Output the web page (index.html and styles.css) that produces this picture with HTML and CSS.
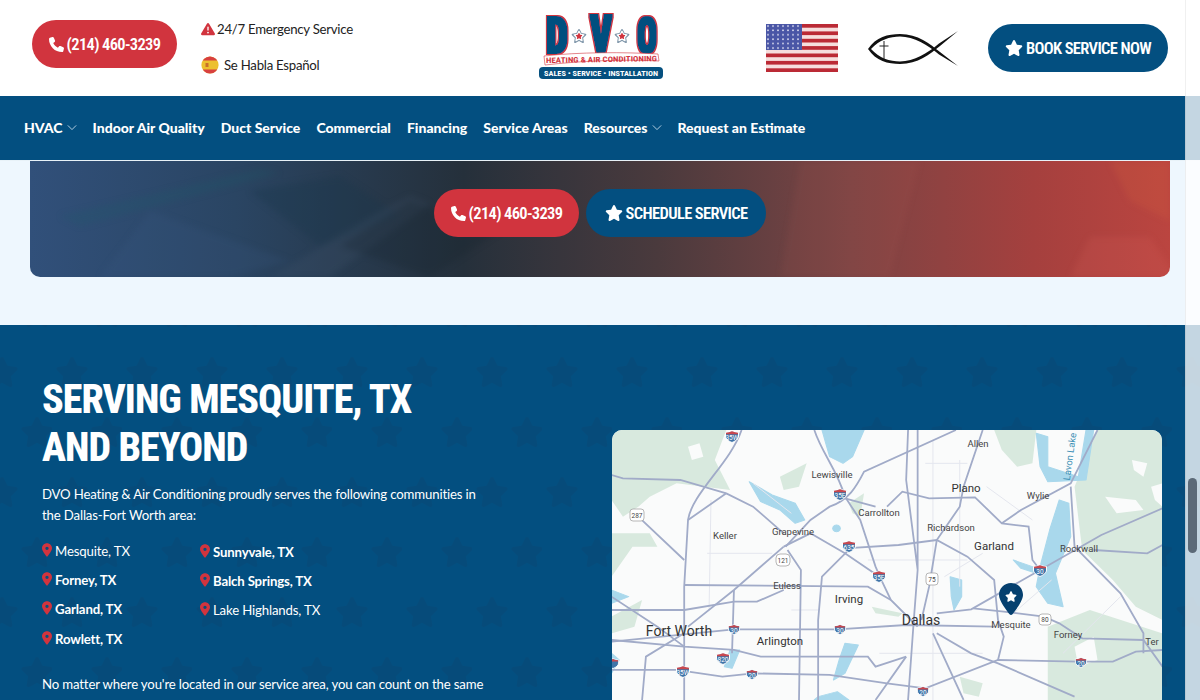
FILE: index.html
```html
<!DOCTYPE html>
<html lang="en">
<head>
    <meta charset="UTF-8">
    <meta name="viewport" content="width=device-width, initial-scale=1.0">
    <title>Serving Mesquite, TX | DVO Heating &amp; Air Conditioning</title>
    <link rel="stylesheet" href="styles.css">
</head>
<body>
    <svg class="icon-defs" aria-hidden="true">
        <symbol id="i-phone" viewBox="0 0 512 512"><path d="M164.9 24.6c-7.7-18.6-28-28.5-47.4-23.2l-88 24C12.1 30.2 0 46 0 64C0 311.4 200.6 512 448 512c18 0 33.8-12.1 38.6-29.5l24-88c5.3-19.4-4.6-39.7-23.2-47.4l-96-40c-16.3-6.8-35.2-2.1-46.3 11.6L304.7 368C234.3 334.7 177.3 277.7 144 207.3L193.3 167c13.7-11.2 18.4-30 11.6-46.3l-40-96z"/></symbol>
        <symbol id="i-star" viewBox="0 0 576 512"><path d="M316.9 18C311.6 7 300.4 0 288.1 0s-23.4 7-28.8 18L195 150.3 51.4 171.5c-12 1.8-22 10.2-25.7 21.7s-.7 24.2 7.9 32.7L137.8 329 113.2 474.7c-2 12 3 24.2 12.9 31.3s23 8 33.8 2.3l128.3-68.5 128.3 68.5c10.8 5.7 23.9 4.9 33.8-2.3s14.9-19.3 12.9-31.3L438.5 329 542.7 225.9c8.6-8.5 11.7-21.2 7.9-32.7s-13.7-19.9-25.7-21.7L381.2 150.3 316.9 18z"/></symbol>
        <symbol id="i-pin" viewBox="0 0 384 512"><path d="M215.7 499.2C267 435 384 279.4 384 192C384 86 298 0 192 0S0 86 0 192c0 87.4 117 243 168.3 307.2c12.3 15.3 35.1 15.3 47.4 0zM192 128a64 64 0 1 1 0 128 64 64 0 1 1 0-128z"/></symbol>
        <symbol id="i-pin-solid" viewBox="0 0 384 512"><path d="M215.7 499.2C267 435 384 279.4 384 192C384 86 298 0 192 0S0 86 0 192c0 87.4 117 243 168.3 307.2c12.3 15.3 35.1 15.3 47.400 0z"/></symbol>
        <symbol id="i-warn" viewBox="0 0 512 512"><path d="M256 32c14.2 0 27.3 7.5 34.5 19.8l216 368c7.3 12.4 7.3 27.7 .2 40.1S486.3 480 472 480H40c-14.3 0-27.6-7.7-34.7-20.1s-7-27.8 .2-40.1l216-368C228.7 39.5 241.8 32 256 32zm0 128c-13.3 0-24 10.7-24 24V296c0 13.3 10.7 24 24 24s24-10.7 24-24V184c0-13.3-10.7-24-24-24zm32 224a32 32 0 1 0 -64 0 32 32 0 1 0 64 0z"/></symbol>
        <symbol id="i-chevron" viewBox="0 0 12 8"><path d="M1 1.500l5 5 5-5" fill="none" stroke="currentColor" stroke-width="1"/></symbol>
        <symbol id="i-shield" viewBox="0 0 14 14" overflow="visible"><path d="M.5 3.500C3 3.500 5 3 7 2c2 1 4 1.500 6.500 1.500V7c0 3-3 5-6.500 6.500C3.500 12 .5 10 .5 7z" fill="#3f74a8" stroke="#fff"/><path d="M1 3.700C3 3.700 5 3.200 7 2.300c2 .9 4 1.400 6 1.400v1.500H1z" fill="#c9474e"/></symbol>
    </svg>

    <header class="top-bar">
        <div class="top-left">
            <a class="btn btn-red" href="#"><svg class="btn-icon phone"><use href="#i-phone"/></svg>(214) 460-3239</a>
            <div class="top-info">
                <p class="info-row"><svg class="warn-icon"><use href="#i-warn"/></svg>24/7 Emergency Service</p>
                <p class="info-row">
                    <svg class="spain-flag" viewBox="0 0 18 18">
                        <defs><clipPath id="spain-clip"><circle cx="9" cy="9" r="8.600"/></clipPath></defs>
                        <g clip-path="url(#spain-clip)">
                            <rect width="18" height="18" fill="#ecc02f"/>
                            <rect width="18" height="4.500" fill="#d8403f"/>
                            <rect y="13.500" width="18" height="4.500" fill="#d8403f"/>
                            <rect x="4.500" y="7" width="3" height="4" fill="#c9702a"/>
                        </g>
                    </svg>
                    <span>Se Habla Español</span>
                </p>
            </div>
        </div>

        <svg class="logo" viewBox="0 0 132 96" role="img" aria-label="DVO Heating and Air Conditioning">
            <defs>
                <filter id="logo-outline" x="-20%" y="-20%" width="140%" height="140%">
                    <feMorphology in="SourceAlpha" operator="dilate" radius="1.700" result="fat"/>
                    <feFlood flood-color="#d1343e"/>
                    <feComposite in2="fat" operator="in" result="red"/>
                    <feMorphology in="SourceGraphic" operator="dilate" radius=".8" result="blue"/>
                    <feMerge><feMergeNode in="red"/><feMergeNode in="blue"/></feMerge>
                </filter>
            </defs>
            <g filter="url(#logo-outline)">
                <text class="logo-letter" x="7" y="53" textLength="22" lengthAdjust="spacingAndGlyphs">D</text>
                <text class="logo-letter tall" x="51" y="53" textLength="22" lengthAdjust="spacingAndGlyphs">V</text>
                <text class="logo-letter" x="98" y="53" textLength="20" lengthAdjust="spacingAndGlyphs">O</text>
            </g>
            <use class="logo-star-back" href="#i-star" x="32" y="28" width="16" height="16"/>
            <use class="logo-star-mid" href="#i-star" x="34" y="30" width="12" height="12"/>
            <use class="logo-star-dot" href="#i-star" x="36.500" y="32.500" width="7" height="7"/>
            <use class="logo-star-back" href="#i-star" x="75" y="28" width="16" height="16"/>
            <use class="logo-star-mid" href="#i-star" x="77" y="30" width="12" height="12"/>
            <use class="logo-star-dot" href="#i-star" x="79.500" y="32.500" width="7" height="7"/>
            <path class="logo-strip" d="M5 56C40 52 85 52 119 54l1 7C85 59 40 61 6 65z"/>
            <text class="logo-sub" x="7" y="63" textLength="111" lengthAdjust="spacingAndGlyphs" transform="rotate(-1 7 63)">HEATING &amp; AIR CONDITIONING</text>
            <rect class="logo-pill" x="0" y="67" width="124" height="12" rx="4"/>
            <text class="logo-tag" x="62" y="76" text-anchor="middle" textLength="114" lengthAdjust="spacingAndGlyphs">SALES • SERVICE • INSTALLATION</text>
        </svg>

        <div class="top-right">
            <svg class="us-flag" viewBox="0 0 72 48">
                <defs><pattern id="flag-stars" width="5" height="4.400" patternUnits="userSpaceOnUse"><circle cx="2" cy="2" r=".9" fill="#e8e8f4"/></pattern></defs>
                <rect width="72" height="48" fill="#f6dedd"/>
                <g fill="#bb2a35">
                    <rect y="0" width="72" height="3.700"/><rect y="7.400" width="72" height="3.700"/><rect y="14.800" width="72" height="3.700"/>
                    <rect y="22.100" width="72" height="3.700"/><rect y="29.500" width="72" height="3.700"/><rect y="36.900" width="72" height="3.700"/>
                    <rect y="44.300" width="72" height="3.700"/>
                </g>
                <rect width="36" height="26" fill="#4a56a6"/>
                <rect width="36" height="26" fill="url(#flag-stars)"/>
            </svg>
            <svg class="fish" viewBox="0 0 90 40">
                <path d="M0 21C8 9 20 6 32 6C50 6 62 16 72 24L90 38 71 26.500C60 17 46 8.500 32 8.500C22 8.500 11 12 3 21C11 30 22 33.500 32 33.500C46 33.500 60 25 71 15.500L90 3 72 18C62 26 50 36 32 36C20 36 8 33 0 21z"/>
                <path class="fish-cross" d="M16 13v18M11.500 18h9"/>
            </svg>
            <a class="btn btn-blue" href="#"><svg class="btn-icon star"><use href="#i-star"/></svg>BOOK SERVICE NOW</a>
        </div>
    </header>

    <nav class="main-nav">
        <a href="#">HVAC<svg class="chevron"><use href="#i-chevron"/></svg></a>
        <a href="#">Indoor Air Quality</a>
        <a href="#">Duct Service</a>
        <a href="#">Commercial</a>
        <a href="#">Financing</a>
        <a href="#">Service Areas</a>
        <a href="#">Resources<svg class="chevron"><use href="#i-chevron"/></svg></a>
        <a href="#">Request an Estimate</a>
    </nav>

    <section class="cta-wrap">
        <div class="cta-banner">
            <svg class="cta-texture" viewBox="0 0 1140 116" preserveAspectRatio="none" aria-hidden="true">
                <path d="M30 55L230 8 250 12 50 65z" fill="#1d5a6a" opacity=".22"/>
                <path d="M120 50L260 100 200 116H70z" fill="#3d5d88" opacity=".16"/>
                <path d="M220 30l90-15 60 40-80 30z" fill="#16344a" opacity=".3"/>
                <path d="M240 116L350 50l30-15 20 8-100 73z" fill="#45566e" opacity=".22"/>
                <path d="M310 85L380 40 470 70 400 116z" fill="#141f28" opacity=".22"/>
                <path d="M770 0h120l-30 116H750z" fill="#c9605a" opacity=".08"/>
                <path d="M1040 116l20-40h60l20 30v10z" fill="#e06a66" opacity=".14"/>
                <path d="M1080 0h60v60l-40-20z" fill="#d9653c" opacity=".2"/>
            </svg>
            <div class="cta-buttons">
                <a class="btn btn-red" href="#"><svg class="btn-icon phone"><use href="#i-phone"/></svg>(214) 460-3239</a>
                <a class="btn btn-blue" href="#"><svg class="btn-icon star"><use href="#i-star"/></svg>SCHEDULE SERVICE</a>
            </div>
        </div>
    </section>

    <section class="areas">
        <svg class="areas-stars" aria-hidden="true">
            <defs>
                <pattern id="star-bg" width="70" height="120" patternUnits="userSpaceOnUse" patternTransform="translate(-18 27)">
                    <use href="#i-star" x="3" y="4" width="34" height="32" fill="#0c4570"/>
                    <use href="#i-star" x="38" y="64" width="34" height="32" fill="#0c4570"/>
                </pattern>
            </defs>
            <rect width="100%" height="100%" fill="url(#star-bg)" opacity=".38"/>
        </svg>

        <div class="areas-text">
            <h2>SERVING MESQUITE, TX<br>AND BEYOND</h2>
            <p>DVO Heating &amp; Air Conditioning proudly serves the following communities in the Dallas-Fort Worth area:</p>
            <div class="city-lists">
                <ul class="city-list">
                    <li><svg class="pin"><use href="#i-pin"/></svg>Mesquite, TX</li>
                    <li><svg class="pin"><use href="#i-pin"/></svg><strong>Forney, TX</strong></li>
                    <li><svg class="pin"><use href="#i-pin"/></svg><strong>Garland, TX</strong></li>
                    <li><svg class="pin"><use href="#i-pin"/></svg><strong>Rowlett, TX</strong></li>
                </ul>
                <ul class="city-list second">
                    <li><svg class="pin"><use href="#i-pin"/></svg><strong>Sunnyvale, TX</strong></li>
                    <li><svg class="pin"><use href="#i-pin"/></svg><strong>Balch Springs, TX</strong></li>
                    <li><svg class="pin"><use href="#i-pin"/></svg>Lake Highlands, TX</li>
                </ul>
            </div>
            <p>No matter where you're located in our service area, you can count on the same high level of quality and reliable service that has made us a trusted name.</p>
        </div>

        <div class="map-card">
            <svg class="map" viewBox="0 0 550 270" aria-label="Map of the Dallas-Fort Worth area">
                <rect width="550" height="270" fill="#fafbfb"/>
                <g transform="translate(-12 -10) scale(.3827 .3333)">
                    <g class="map-green">
                        <path d="M30 30H330L300 120 340 210 200 190 130 230 100 260 60 290 30 240z"/>
                        <path d="M1300 30H1470V600L1400 560 1340 480 1260 390 1240 200z"/>
                        <path d="M1170 620L1280 570 1470 640V840H1170z"/>
                        <path d="M30 340H130L150 380H85L30 470z"/>
                        <path d="M1030 30H1140L1130 130 1090 140 1050 90z"/>
                        <path d="M710 560L790 580 780 590 720 580z"/>
                        <path d="M650 250L690 220 680 290 660 280z"/>
                        <path d="M30 590L110 540 90 620 30 640z"/>
                        <path d="M940 770L1000 790 990 830 950 820z"/>
                        <path d="M470 170L540 130 520 200 480 210z"/>
                    </g>
                    <g class="map-white">
                        <path d="M1390 120L1430 130 1420 170 1395 150z"/>
                        <path d="M1320 230L1400 240 1420 270 1350 280z"/>
                        <path d="M1440 200L1470 190V260L1450 240z"/>
                        <path d="M230 80L260 70 270 110 240 120z"/>
                        <path d="M1240 680L1290 650 1300 720 1250 740z"/>
                    </g>
                    <g class="map-water">
                        <path d="M580 30H690L660 110 635 130 600 110 590 70z"/>
                        <path d="M390 185L450 225 510 250 535 300 510 310 470 270 420 245z"/>
                        <path d="M1140 40L1170 50 1170 140 1250 170 1270 30H1290L1270 180 1170 185 1150 140z"/>
                        <path d="M1200 240L1225 250 1230 350 1190 460 1210 560 1170 550 1140 500 1150 440 1175 330z"/>
                        <path d="M1080 420L1130 440 1140 460 1100 445z"/>
                        <path d="M915 470L945 480 945 530 925 570 918 530z"/>
                        <path d="M640 670L675 675 640 760 610 780 625 720z"/>
                        <path d="M340 690L365 690 345 745 325 740z"/>
                        <path d="M30 700L50 720 30 760z"/>
                        <path d="M30 510L75 530 30 550z"/>
                        <path d="M570 830L620 815 650 840H560z"/>
                        <path d="M618 335a10 10 0 1 1 .1 0z"/>
                    </g>
                    <g class="roads-minor">
                        <path d="M870 60V840M940 120V500M700 420H960M850 130H960M730 700H1000M280 400H450M500 570H570"/>
                        <path d="M290 240L285 570M400 190L500 280M1010 200L1130 300M1080 580L1180 480"/>
                        <path d="M1210 700L1360 530M900 470L1000 400"/>
                    </g>
                    <g class="roads">
                        <path d="M370 30C340 130 240 220 230 300L220 500V840"/>
                        <path d="M930 30L690 155C670 200 650 240 600 260L550 300 485 380"/>
                        <path d="M560 30C580 100 620 150 640 230L680 300 720 440 735 480 760 540 830 620"/>
                        <path d="M830 30V450L820 600 805 840M805 30L800 180 830 450"/>
                        <path d="M640 235L720 260M750 260L790 215 860 235 980 232 1050 310 1120 320 1130 420 1150 450"/>
                        <path d="M480 380L550 340 640 400 730 470M640 385L780 375 880 360 960 410 1030 480 1040 600 1055 650 1040 720"/>
                        <path d="M30 665L350 628H620L800 615 1030 620"/>
                        <path d="M220 495L700 500 760 540"/>
                        <path d="M30 570H220L350 545H410L480 510"/>
                        <path d="M880 580L970 568 1150 450 1310 345 1470 265"/>
                        <path d="M30 750H200L320 770 400 760 600 765 750 790 850 805 1040 720 1250 725H1340L1400 695 1470 690"/>
                        <path d="M975 565L1055 575 1160 590 1200 610 1260 655 1420 660 1470 740"/>
                        <path d="M1230 200L1240 380 1360 520 1420 640V700"/>
                        <path d="M1050 310L1100 270 1230 190 1300 30"/>
                        <path d="M1290 390L1430 400 1470 375"/>
                        <path d="M1000 30L950 200 940 260 880 360 860 500 840 600"/>
                        <path d="M30 165L60 175 210 180 330 220 400 260 480 340"/>
                        <path d="M330 220L230 300M100 290L220 420"/>
                        <path d="M880 640L970 700 1040 730 1240 830"/>
                        <path d="M350 510L345 700M570 840V600L580 470 650 390M520 840L525 450 490 390"/>
                        <path d="M30 660L220 680 350 690 420 710H700L720 740 800 710"/>
                        <path d="M30 530L150 620 220 680M230 620L350 510 480 380M110 840L120 710 220 640"/>
                        <path d="M800 710L720 840M870 640L950 840"/>
                    </g>
                </g>
                <g class="shields">
                    <g transform="translate(120 6)"><use href="#i-shield" x="-7" y="-7" width="14" height="14"/><text y="4">35W</text></g>
                    <g transform="translate(228 64)"><use href="#i-shield" x="-7" y="-7" width="14" height="14"/><text y="4">35E</text></g>
                    <g transform="translate(237 116)"><use href="#i-shield" x="-7" y="-7" width="14" height="14"/><text y="4">635</text></g>
                    <g transform="translate(267 146)"><use href="#i-shield" x="-7" y="-7" width="14" height="14"/><text y="4">35E</text></g>
                    <g transform="translate(428 140)"><use href="#i-shield" x="-7" y="-7" width="14" height="14"/><text y="4">30</text></g>
                    <g transform="translate(122 199)"><use href="#i-shield" x="-6" y="-6" width="12" height="12"/><text y="4">30</text></g>
                    <g transform="translate(228 199)"><use href="#i-shield" x="-6" y="-6" width="12" height="12"/><text y="4">30</text></g>
                    <g transform="translate(111 228)"><use href="#i-shield" x="-7" y="-7" width="14" height="14"/><text y="4">820</text></g>
                    <g transform="translate(71 241)"><use href="#i-shield" x="-7" y="-7" width="14" height="14"/><text y="4">35W</text></g>
                    <g transform="translate(140 244)"><use href="#i-shield" x="-6" y="-6" width="12" height="12"/><text y="4">20</text></g>
                    <g transform="translate(311 261)"><use href="#i-shield" x="-6" y="-6" width="12" height="12"/><text y="4">20</text></g>
                    <g transform="translate(469 232)"><use href="#i-shield" x="-6" y="-6" width="12" height="12"/><text y="4">20</text></g>
                    <g transform="translate(1 233)"><use href="#i-shield" x="-6" y="-6" width="12" height="12"/></g>
                </g>
                <g class="shields-white">
                    <g transform="translate(25 85)"><rect x="-7" y="-6" width="14" height="12" rx="3"/><text y="3">287</text></g>
                    <g transform="translate(171 130)"><rect x="-7" y="-6" width="14" height="12" rx="4"/><text y="3">121</text></g>
                    <g transform="translate(320 149)"><rect x="-6" y="-6" width="12" height="12" rx="3"/><text y="3">75</text></g>
                    <g transform="translate(433 189)"><rect x="-6" y="-5" width="12" height="11" rx="3"/><text y="3">80</text></g>
                </g>
                <g class="map-labels">
                    <text class="big" x="67" y="206">Fort Worth</text>
                    <text class="big" x="309" y="195">Dallas</text>
                    <text class="mid" x="168" y="215">Arlington</text>
                    <text class="mid" x="237" y="173">Irving</text>
                    <text class="mid" x="354" y="62">Plano</text>
                    <text class="mid" x="382" y="120">Garland</text>
                    <text x="366" y="17">Allen</text>
                    <text x="220" y="48">Lewisville</text>
                    <text x="426" y="69">Wylie</text>
                    <text x="267" y="86">Carrollton</text>
                    <text x="339" y="101">Richardson</text>
                    <text x="467" y="122">Rockwall</text>
                    <text x="113" y="109">Keller</text>
                    <text x="181" y="105">Grapevine</text>
                    <text x="175" y="159">Euless</text>
                    <text x="399" y="198">Mesquite</text>
                    <text x="456" y="208">Forney</text>
                    <text x="540" y="215">Ter</text>
                    <text class="lake" transform="translate(461 27) rotate(-82)">Lavon Lake</text>
                </g>
                <use class="map-pin" href="#i-pin-solid" x="387" y="153" width="24" height="32"/>
                <use class="map-pin-star" href="#i-star" x="393" y="161" width="12" height="11"/>
            </svg>
        </div>
    </section>

    <div class="scroll-track" aria-hidden="true"><div class="scroll-thumb"></div></div>
</body>
</html>
```

FILE: styles.css
```css
html, body {
    height: 700px;
    overflow: hidden;
}

body {
    margin: 0;
    font-family: "Lato", Arial, sans-serif;
    font-size: 13.200px;
    letter-spacing: -.15px;
    color: #222;
    background-color: #eef7fe;
}

.icon-defs {
    display: none;
}

p {
    margin: 0;
}

/* top white bar */
.top-bar {
    display: grid;
    grid-template-columns: 1fr auto 1fr;
    align-items: center;
    height: 96px;
    padding: 0 32px;
    box-sizing: border-box;
    background: #fff;
}

.top-left {
    display: flex;
    align-items: center;
    gap: 24px;
}

.top-left .btn {
    margin-top: -8px;
}

.top-info {
    display: flex;
    flex-direction: column;
    gap: 18px;
    margin-top: -2px;
}

.info-row {
    display: flex;
    align-items: center;
    gap: 2px;
    height: 18px;
    letter-spacing: -.25px;
}

.warn-icon {
    width: 14px;
    height: 14px;
    fill: #d1343e;
}

.spain-flag {
    width: 18px;
    height: 18px;
    margin-right: 3px;
}

.logo {
    display: block;
    width: 132px;
    height: 96px;
    margin: 0 -8px 0 2px;
}

.logo text {
    font-family: "Roboto", sans-serif;
    font-stretch: 75%;
    letter-spacing: 0;
}

.logo-letter {
    font-size: 50px;
    font-weight: 900;
    fill: #05507f;
}

.logo-letter.tall {
    font-size: 54px;
}

.logo-star-back {
    fill: #7d94a8;
}

.logo-star-mid {
    fill: #fff;
}

.logo-star-dot {
    fill: #d1343e;
}

.logo-strip {
    fill: #fff;
    stroke: #d1343e;
    stroke-width: .6;
}

.logo-sub {
    font-size: 7.500px;
    font-weight: 700;
    fill: #d1343e;
}

.logo-pill {
    fill: #05507f;
}

.logo-tag {
    font-size: 8px;
    font-weight: 700;
    fill: #fff;
}

.top-right {
    display: flex;
    align-items: center;
    justify-content: flex-end;
    gap: 30px;
}

.us-flag {
    width: 72px;
    height: 48px;
}

.fish {
    width: 90px;
    height: 40px;
    fill: #111;
}

.fish-cross {
    fill: none;
    stroke: #222;
    stroke-width: 1;
}

/* buttons */
.btn {
    display: flex;
    align-items: center;
    justify-content: center;
    gap: 3px;
    height: 48px;
    border-radius: 24px;
    color: #fff;
    text-decoration: none;
    white-space: nowrap;
    font-family: "Roboto", Arial, sans-serif;
    font-stretch: 75%;
    font-size: 16.500px;
    font-weight: 600;
    letter-spacing: -.65px;
}

.btn-red {
    width: 145px;
    background-color: #d1343e;
}

.btn-blue {
    width: 180px;
    background-color: #034f80;
}

.btn-icon {
    flex: none;
    fill: #fff;
}

.btn-icon.phone {
    width: 15px;
    height: 15px;
}

.btn-icon.star {
    width: 18px;
    height: 16px;
}

/* nav */
.main-nav {
    display: flex;
    align-items: center;
    gap: 16px;
    height: 62px;
    padding: 0 24px 2px;
    background-color: #034f80;
    border-bottom: 1px solid #e8f2f8;
}

.main-nav a {
    display: flex;
    align-items: center;
    gap: 4px;
    color: #fff;
    text-decoration: none;
    font-size: 14px;
    font-weight: 900;
    letter-spacing: 0;
}

.chevron {
    width: 10px;
    height: 7px;
    color: #d6e6f2;
}

/* call to action banner */
.cta-wrap {
    padding: 0 30px 48px;
}

.cta-banner {
    position: relative;
    overflow: hidden;
    padding: 28px 0 40px;
    border-radius: 0 0 10px 10px;
    background: linear-gradient(90deg, #31507a 0%, #2a4563 18%, #25303b 38%, #4a3a3d 55%, #7c4444 72%, #a5403e 88%, #bb4540 100%);
}

.cta-texture {
    position: absolute;
    top: 0;
    left: 0;
    width: 100%;
    height: 100%;
    filter: blur(3px);
}

.cta-buttons {
    position: relative;
    display: flex;
    justify-content: center;
    gap: 7px;
}

/* service areas */
.areas {
    position: relative;
    display: flex;
    justify-content: space-between;
    height: 375px;
    overflow: hidden;
    padding: 0 38px 0 42px;
    box-sizing: border-box;
    background-color: #034f80;
    color: #fff;
}

.areas-stars {
    position: absolute;
    top: 0;
    left: 0;
    width: 100%;
    height: 100%;
}

.areas-text {
    position: relative;
    width: 445px;
    padding-top: 51px;
}

.areas-text h2 {
    margin: 0 0 12px;
    font-family: "Roboto", Arial, sans-serif;
    font-stretch: 75%;
    font-size: 40px;
    line-height: 48px;
    font-weight: 800;
    letter-spacing: -.95px;
}

.areas-text p {
    line-height: 21px;
}

.city-lists {
    display: flex;
    margin: 10px 0 21px;
}

.city-list {
    width: 158px;
    margin: 0;
    padding: 0;
    list-style: none;
}

.city-list.second {
    padding-top: 1px;
}

.city-list li {
    display: flex;
    align-items: center;
    gap: 3px;
    height: 29.300px;
}

.pin {
    width: 10px;
    height: 14px;
    fill: #d1343e;
    margin-bottom: 2px;
}

.map-card {
    position: relative;
    width: 550px;
    height: 270px;
    margin-top: 105px;
    overflow: hidden;
    border-radius: 10px 10px 0 0;
}

.map {
    display: block;
    width: 550px;
    height: 270px;
    letter-spacing: 0;
}

.map-green {
    fill: #d8e9de;
}

.map-white {
    fill: #fafbfb;
}

.map-water path {
    fill: #a9d8ec;
    stroke: #a9d8ec;
    stroke-width: 3px;
    stroke-linejoin: round;
}

.roads path, .roads-minor path {
    fill: none;
    vector-effect: non-scaling-stroke;
}

.roads path {
    stroke: #a1abc8;
    stroke-width: 1.800px;
}

.roads-minor path {
    stroke: #e4e6ee;
    stroke-width: 1px;
}

.shields text, .shields-white text {
    font-family: "Roboto", Arial, sans-serif;
    font-size: 6.500px;
    text-anchor: middle;
}

.shields text {
    fill: #fff;
}

.shields-white rect {
    fill: #fff;
    stroke: #9a9a9a;
    stroke-width: .7;
}

.shields-white text {
    fill: #444;
}

.map-labels text {
    font-family: "Roboto", Arial, sans-serif;
    font-size: 9.500px;
    fill: #444;
    text-anchor: middle;
}

.map-labels .big {
    font-size: 14px;
    fill: #333;
}

.map-labels .mid {
    font-size: 11.500px;
    fill: #333;
}

.map-labels .lake {
    fill: #3a8fb5;
}

.map-pin {
    fill: #05406f;
}

.map-pin-star {
    fill: #fff;
}

/* scrollbar in the screenshot */
.scroll-track {
    position: absolute;
    top: 0;
    right: 0;
    width: 15px;
    height: 700px;
    box-sizing: border-box;
    padding: 478px 3px 0 2px;
    background: rgba(255, 255, 255, .77);
    border-left: 1px solid rgba(0, 0, 0, .06);
}

.scroll-thumb {
    height: 75px;
    border-radius: 5px;
    background-color: #5c6a78;
}
```
